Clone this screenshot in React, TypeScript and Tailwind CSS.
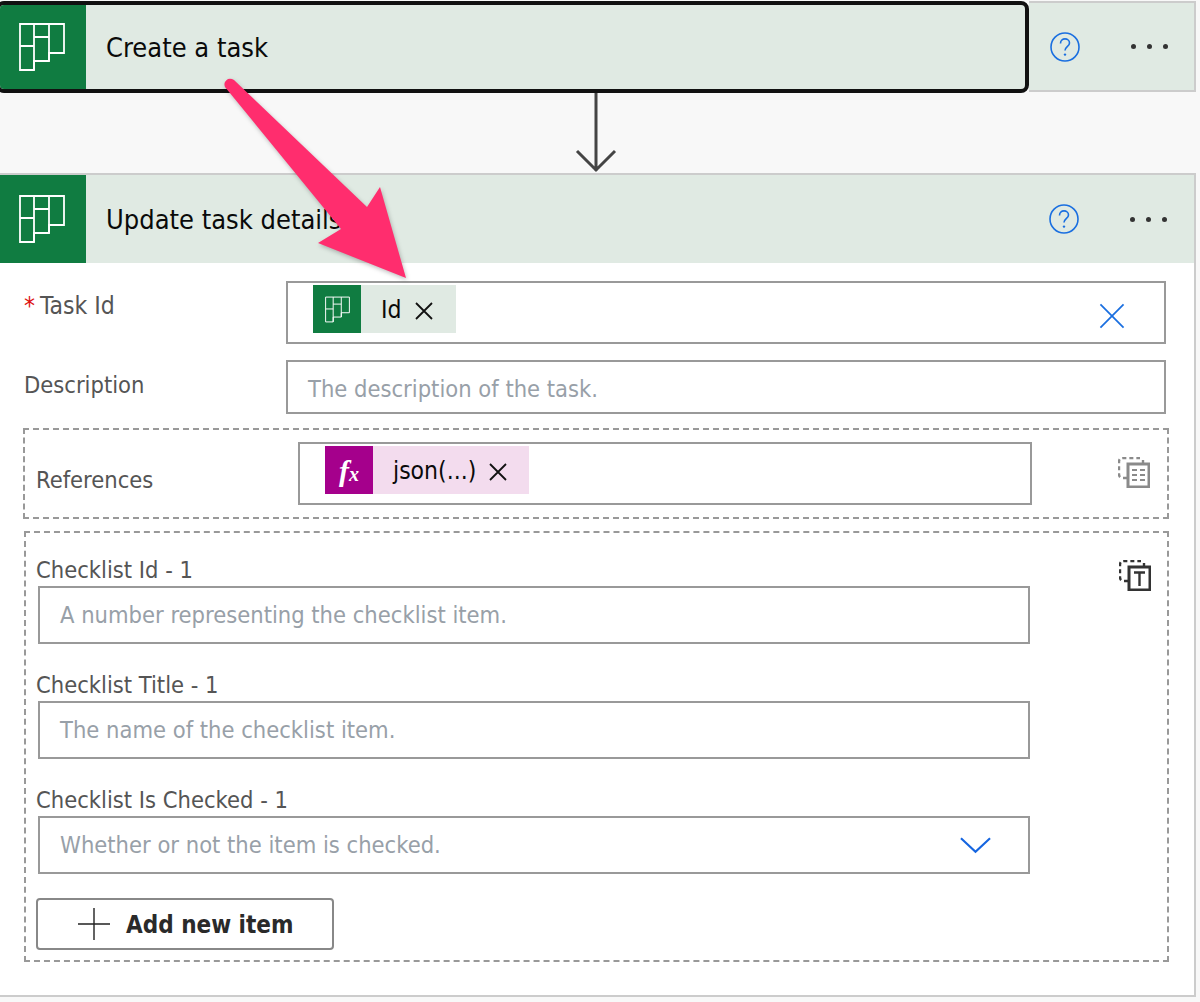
import React from "react";

const font = { fontFamily: '"DejaVu Sans Condensed", "DejaVu Sans", sans-serif' };

function PlannerIcon({ w, h, stroke = 1.8 }: { w: number; h: number; stroke?: number }) {
  return (
    <svg width={w} height={h} viewBox="0 0 46 50" fill="none" stroke="#ffffff" strokeWidth={stroke}>
      <path d="M1 2H45V31H30V39H15V48H1Z" />
      <path d="M15 2V48M30 2V39M1 24H15M15 15H30" />
    </svg>
  );
}

function Help() {
  return (
    <svg width="30" height="30" viewBox="0 0 30 30" fill="none">
      <circle cx="15" cy="15" r="14" stroke="#1a6fe0" strokeWidth="1.6" />
      <path d="M10.5 11.4c0-2.8 2.1-4.5 4.5-4.5s4.5 1.6 4.5 4c0 3.8-4.5 3.8-4.5 7.6" stroke="#1a6fe0" strokeWidth="1.6" />
      <circle cx="15" cy="22.6" r="1.2" fill="#1a6fe0" />
    </svg>
  );
}

function Dots() {
  return (
    <div className="flex gap-[11px]">
      <span className="w-[5px] h-[5px] rounded-full bg-[#333]" />
      <span className="w-[5px] h-[5px] rounded-full bg-[#333]" />
      <span className="w-[5px] h-[5px] rounded-full bg-[#333]" />
    </div>
  );
}

function Cross({ size = 18, color = "#111", w = 1.8 }: { size?: number; color?: string; w?: number }) {
  return (
    <svg width={size} height={size} viewBox="0 0 18 18" fill="none" stroke={color} strokeWidth={w}>
      <path d="M1 1L17 17M17 1L1 17" />
    </svg>
  );
}

function Actions() {
  return (
    <div className="flex items-center">
      <div className="ml-[21px] w-[30px] h-[30px]">
        <Help />
      </div>
      <div className="ml-[51px]">
        <Dots />
      </div>
    </div>
  );
}

function Tile({ children }: { children: React.ReactNode }) {
  return <div className="w-[86px] self-stretch bg-[#107c41] flex items-center justify-center shrink-0 pr-[3px]">{children}</div>;
}

function Field({ label, placeholder, chevron }: { label: string; placeholder: string; chevron?: boolean }) {
  return (
    <div>
      <div className="pl-[10px] h-[24px] text-[23.5px] leading-[24px] text-[#555]">{label}</div>
      <div className="ml-[12px] mt-[4px] w-[992px] h-[58px] border-2 border-[#999] flex items-center pl-[20px] pr-[37px] justify-between bg-white">
        <span className="text-[23.5px] pt-[2px] text-[#98a0a8]">{placeholder}</span>
        {chevron && (
          <svg width="31" height="18" viewBox="0 0 32 18" fill="none" stroke="#1565e0" strokeWidth="2.2">
            <path d="M1 2L16 16L31 2" />
          </svg>
        )}
      </div>
    </div>
  );
}

export default function App() {
  return (
    <div className="relative w-[1200px] h-[1002px] overflow-hidden bg-[#f8f8f8]" style={font}>
      <div className="pt-px flex">
        <div className="-ml-[4px] w-[1033px] h-[92px] border-4 border-[#111] rounded-[8px] overflow-hidden flex bg-[#e0eae3]">
          <Tile>
            <PlannerIcon w={46} h={50} />
          </Tile>
          <div className="pl-[20px] pt-[3px] flex items-center text-[27px] text-[#0a0a0a]">Create a task</div>
        </div>
        <div className="w-[167px] h-[91px] border-2 border-[#ccc] border-l-0 bg-[#e0eae3] flex items-center">
          <Actions />
        </div>
      </div>

      <div className="h-[80px] flex justify-center w-[1192px]">
        <svg width="44" height="80" viewBox="0 0 44 80" fill="none" stroke="#444" strokeWidth="3">
          <path d="M22 0V78M3 58L22 77L41 58" />
        </svg>
      </div>

      <div className="w-[1196px] h-[824px] border-t-2 border-r-2 border-b-2 border-[#ccc] bg-white">
        <div className="h-[88px] flex bg-[#e0eae3]">
          <Tile>
            <PlannerIcon w={46} h={50} />
          </Tile>
          <div className="pl-[20px] pt-[2px] w-[942px] flex items-center text-[27px] text-[#0a0a0a]">Update task details</div>
          <Actions />
        </div>

        <div className="pl-[24px] pt-[18px]">
          <div className="flex h-[63px]">
            <div className="w-[262px] pt-[10px] text-[24.5px] leading-[30px] text-[#555]">
              <span className="text-[#d11] mr-[5px]">*</span>Task Id
            </div>
            <div className="w-[880px] h-[63px] border-2 border-[#999] flex items-start pl-[25px] pt-[2px] pr-[39px] relative justify-between">
              <div className="flex h-[48px] bg-[#e0eae3] items-center">
                <div className="w-[48px] h-[48px] bg-[#107c41] flex items-center justify-center">
                  <PlannerIcon w={25} h={27} stroke={1.8} />
                </div>
                <span className="ml-[20px] pt-[3px] text-[24.5px] text-[#0a0a0a]">Id</span>
                <span className="ml-[13px] mr-[23px] mt-[4px]"><Cross size={18} /></span>
              </div>
              <div className="mt-[18px]"><Cross size={26} color="#1a6fe0" w={1.2} /></div>
            </div>
          </div>

          <div className="flex h-[54px] mt-[16px]">
            <div className="w-[262px] pt-[10px] text-[23.5px] leading-[30px] text-[#555]">Description</div>
            <div className="w-[880px] h-[54px] border-2 border-[#999] flex items-center pl-[20px] pt-[5px] text-[23.5px] text-[#98a0a8]">
              The description of the task.
            </div>
          </div>

          <div className="-ml-px mt-[14px] w-[1146px] h-[91px] border-2 border-dashed border-[#999] flex">
            <div className="w-[273px] pl-[11px] pt-[35px] text-[23.5px] leading-[30px] text-[#555]">References</div>
            <div className="mt-[12px] w-[734px] h-[63px] border-2 border-[#999] pl-[25px] pt-[2px]">
              <div className="inline-flex h-[48px] bg-[#f3dcee] items-center">
                <div className="w-[48px] h-[48px] bg-[#a5008c] flex items-center justify-center text-white text-[30px] italic font-bold" style={{ fontFamily: '"Liberation Serif", serif' }}>
                  <span>f<span className="text-[20px]">x</span></span>
                </div>
                <span className="ml-[20px] pt-[3px] text-[24.5px] text-[#0a0a0a]">json(...)</span>
                <span className="ml-[13px] mr-[22px] mt-[4px]"><Cross size={18} /></span>
              </div>
            </div>
            <div className="ml-[86px] mt-[27px]">
              <svg width="32" height="31" viewBox="0 0 32 31" fill="none" stroke="#8a8a8a" strokeWidth="2.4">
                <path d="M9 21H5Q1 21 1 17V5Q1 1 5 1H22" strokeDasharray="4 3" />
                <path d="M25 3V7" />
                <rect x="10" y="7" width="21" height="23" strokeWidth="3" />
                <path d="M14 13H19M22 13H27M14 18H19M22 18H27M14 23H19M22 23H27" strokeWidth="2.2" />
              </svg>
            </div>
          </div>

          <div className="mt-[12px] w-[1145px] h-[431px] border-2 border-dashed border-[#999] relative">
            <div className="absolute right-[16px] top-[27px]">
              <svg width="32" height="31" viewBox="0 0 32 31" fill="none" stroke="#333" strokeWidth="2.4">
                <path d="M9 21H5Q1 21 1 17V5Q1 1 5 1H22" strokeDasharray="4 3" />
                <path d="M25 3V7" />
                <rect x="10" y="7" width="21" height="23" strokeWidth="3" />
                <path d="M15 12.5H26M20.5 12.5V26" strokeWidth="2.4" />
              </svg>
            </div>
            <div className="pt-[25px]">
              <Field label="Checklist Id - 1" placeholder="A number representing the checklist item." />
              <div className="mt-[29px]">
                <Field label="Checklist Title - 1" placeholder="The name of the checklist item." />
              </div>
              <div className="mt-[29px]">
                <Field label="Checklist Is Checked - 1" placeholder="Whether or not the item is checked." chevron />
              </div>
            </div>
            <div className="ml-[10px] mt-[24px] w-[298px] h-[52px] border-2 border-[#888] rounded-[4px] flex items-center pl-[40px]">
              <svg width="32" height="32" viewBox="0 0 32 32" fill="none" stroke="#222" strokeWidth="1.4">
                <path d="M16 0V32M0 16H32" />
              </svg>
              <span className="ml-[16px] pt-[2px] text-[24px] font-bold text-[#2a2a2a]">Add new item</span>
            </div>
          </div>
        </div>
      </div>

      <svg className="absolute left-0 top-0 pointer-events-none" width="1200" height="1002" viewBox="0 0 1200 1002" style={{ filter: "drop-shadow(1px 2px 2px rgba(0,0,0,0.25))" }}>
        <path
          d="M234 80L367 207L380 187L406 278L318 243L341 229L225 87Q223 82 228 79Q231 78 234 80Z"
          fill="#ff2d6e"
        />
      </svg>
    </div>
  );
}
